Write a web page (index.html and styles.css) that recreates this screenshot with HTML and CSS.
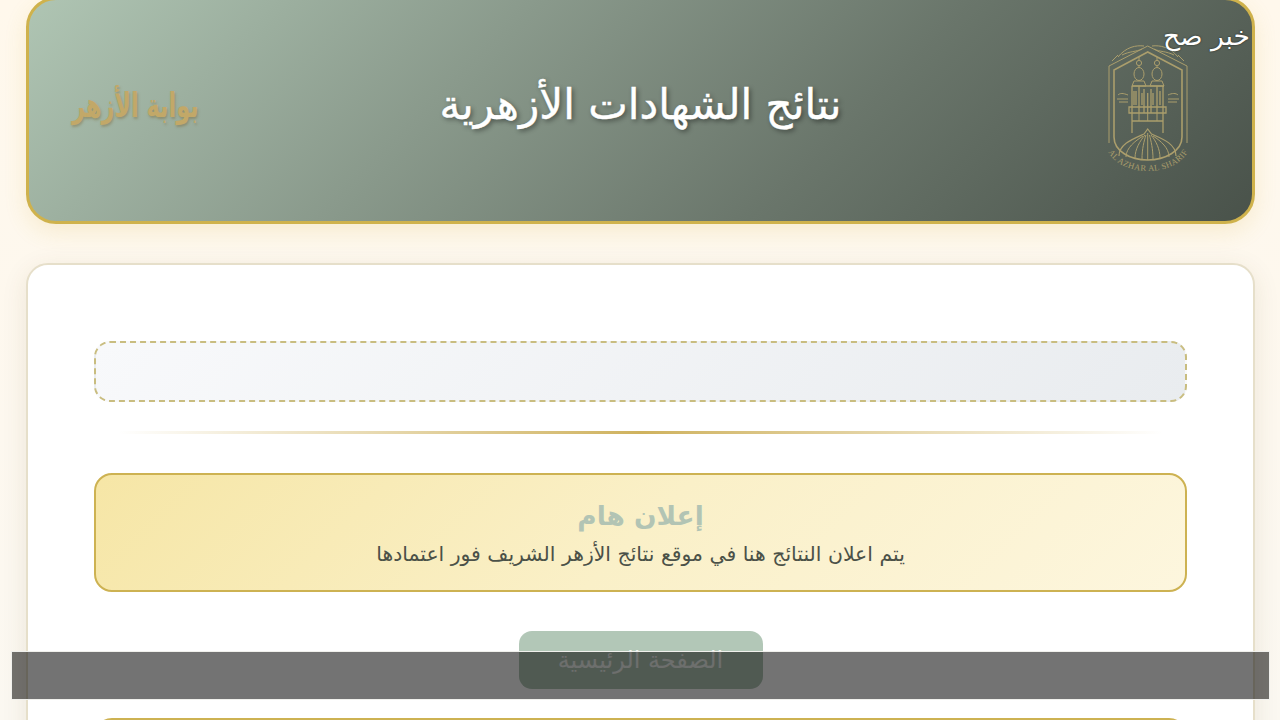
FILE: index.html
```html
<!DOCTYPE html>
<html lang="ar" dir="rtl">
<head>
<meta charset="utf-8">
<title>نتائج الشهادات الأزهرية</title>
<link rel="stylesheet" href="styles.css">
</head>
<body>
<div class="brand-tag">خبر صح</div>
<main class="page">
  <header class="hero">
    <svg class="emblem" viewBox="0 0 84 134" aria-hidden="true">
      <g fill="none" stroke="#ab9e6c" stroke-width="1">
        <path d="M3 100 V23 L41.7 3 L81 23 V100"/>
        <path stroke-width="1.6" d="M41.7 9 L8 27 V94 C8 108 24 117 41.7 117 C59 117 76 108 76 94 V27 Z"/>
        <path d="M12 14C20 4 30 2 38 3M72 14C64 4 54 2 46 3M16 12C24 8 30 9 36 6M68 12C60 8 54 9 48 6M6 18L12 12M78 18L72 12"/>
        <circle cx="33" cy="20" r="2.6"/><circle cx="51" cy="20" r="2.6"/>
        <ellipse cx="33" cy="31" rx="5" ry="6.5"/><ellipse cx="51" cy="31" rx="5" ry="6.5"/>
        <path d="M33 14V17.4M51 14V17.4M33 23V24.5M51 23V24.5M28 38H38L40 43H26ZM46 38H56L58 43H44Z"/>
        <path stroke-width="1.3" d="M26 43H58M26 43V90M57 43V90M33 43V70M38 46V70M45 46V70M51 43V70M41.7 50V70M23 64H60V70H23ZM23 64V70M60 64V70M26 78H57M28 48V62M30 48V62M54 48V62M36 50V62M47 50V62"/>
        <path d="M33 70V78M41.7 70V78M51 70V78"/>
        <path stroke-width="1.2" d="M13 113C13 101 27 96 38 91L41.7 86L45.5 91C57 96 70 101 70 113"/>
        <path d="M20 114C20 105 29 98 37 93M29 115C29 106 34 98 39 92M36 116C36 106 38 98 40 92M41.7 90V117M47 116C47 106 45 98 43.5 92M54 115C54 106 50 98 45 92M63 114C63 105 55 98 47 93"/>
        <path d="M12 52C14 50 17 50 22 52M62 52C66 50 70 50 72 52M11 56H22M62 56H73M13 59H22M62 59H71"/>
        <path id="emblem-arc" stroke="none" d="M0 104 C10 136 74 136 84 104"/>
      </g>
      <text class="emblem-text" dir="ltr"><textPath href="#emblem-arc" startOffset="50%" text-anchor="middle">AL AZHAR AL SHARIF</textPath></text>
    </svg>
    <h1 class="hero-title">نتائج الشهادات الأزهرية</h1>
    <div class="portal-mark">بوابة الأزهر</div>
  </header>

  <section class="card">
    <div class="slot"></div>
    <div class="rule"></div>
    <div class="notice">
      <h2 class="notice-title">إعلان هام</h2>
      <p class="notice-text">يتم اعلان النتائج هنا في موقع نتائج الأزهر الشريف فور اعتمادها</p>
    </div>
    <a class="home-btn">الصفحة الرئيسية</a>
    <div class="next-box"></div>
  </section>
</main>
<div class="overlay-bar"></div>
</body>
</html>
```
FILE: styles.css
```css
* { box-sizing: border-box; }
html, body { margin: 0; height: 720px; overflow: hidden; }
body {
  background: linear-gradient(180deg, #fff8ec 0%, #fdf8ef 60%, #fbf8f1 100%);
  font-family: "DejaVu Sans", "Noto Sans", sans-serif;
}
.page { padding: 0 25px 0 26px; margin-top: -3px; }
.hero {
  height: 227px;
  border: 3px solid #cfb24c;
  border-radius: 30px;
  background: linear-gradient(135deg, #afc5b3 0%, #8a9a8c 35%, #6a766b 65%, #49524a 100%);
  box-shadow: 0 8px 22px rgba(212, 175, 55, .16);
  display: grid;
  grid-template-columns: 1fr auto 1fr;
  align-items: center;
  padding: 0 60px;
}
.emblem { width: 84px; height: 134px; margin-top: -2px; margin-inline-start: 2px; justify-self: start; }
.emblem-text { font: 8.5px "Liberation Serif", serif; fill: #ab9e6c; letter-spacing: .3px; }
.hero-title {
  margin: -12px 0 0;
  font-size: 42px;
  font-weight: 400;
  color: #fff;
  -webkit-text-stroke: .4px #fff;
  text-shadow: 2px 2px 5px rgba(0, 0, 0, .45);
}
.portal-mark {
  justify-self: end;
  margin-top: -12px;
  margin-inline-end: -17px;
  font-size: 22.4px;
  font-weight: 700;
  white-space: nowrap;
  color: #c2a868;
  text-shadow: 1px 1px 2px rgba(120, 100, 50, .4);
  transform: scaleY(1.5);
}
.card {
  margin: 39px 0 0;
  padding: 76px 66px 0;
  background: #fff;
  border: 2px solid #e6dfca;
  border-radius: 22px;
  box-shadow: 0 6px 26px rgba(90, 70, 30, .10);
  display: flex;
  flex-direction: column;
  align-items: stretch;
}
.slot {
  height: 61px;
  border: 2px dashed #c9bd80;
  border-radius: 16px;
  background: linear-gradient(135deg, #f8f9fb, #e9ecef);
}
.rule {
  height: 3px;
  margin: 29px 24px 39px;
  background: linear-gradient(90deg, rgba(201,169,74,0), #cfb25e 50%, rgba(201,169,74,0));
}
.notice {
  height: 119px;
  padding: 25px 20px 0;
  border: 2px solid #cdb252;
  border-radius: 18px;
  background: linear-gradient(135deg, #f6e6a6 0%, #faf0c8 50%, #fdf6de 100%);
  text-align: center;
}
.notice-title { margin: 0; font-size: 26.4px; line-height: 32px; font-weight: 700; color: #b2c4b4; }
.notice-text { margin: 10px 0 0; font-size: 20.4px; line-height: 24px; color: #4b5148; }
.home-btn {
  align-self: center;
  width: 244px;
  height: 58px;
  margin-top: 39px;
  border-radius: 13px;
  background: #b2c7b7;
  color: #f2f5f2;
  font-size: 24px;
  line-height: 58px;
  text-align: center;
}
.next-box {
  height: 80px;
  margin-top: 29px;
  border: 2px solid #cdb252;
  border-radius: 18px;
  background: #fdf6de;
}
.brand-tag {
  position: absolute;
  top: 20px;
  right: 30px;
  font-size: 26.5px;
  line-height: 32px;
  color: #fff;
  z-index: 3;
  text-shadow: 0 0 2px rgba(0,0,0,.7);
}
.overlay-bar {
  position: fixed;
  left: 11px;
  top: 651px;
  width: 1259px;
  height: 49px;
  background: rgba(0, 0, 0, .55);
  border: 1px solid #f0f0ec;
  background-clip: padding-box;
  z-index: 4;
}
```
